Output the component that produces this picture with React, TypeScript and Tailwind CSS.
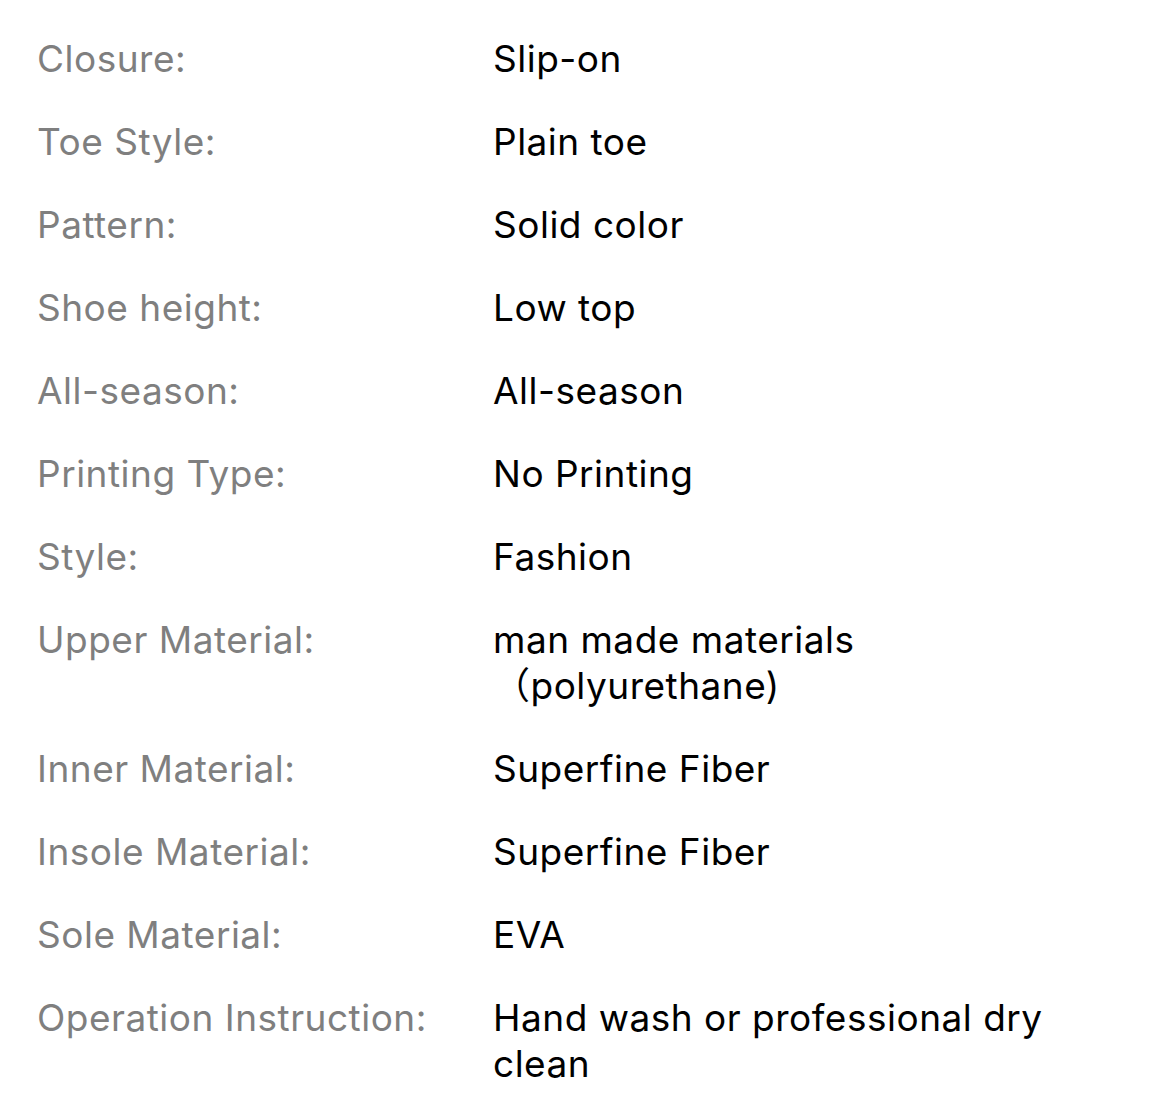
import React from "react";

const rows: [string, React.ReactNode][] = [
  ["Closure:", "Slip-on"],
  ["Toe Style:", "Plain toe"],
  ["Pattern:", "Solid color"],
  ["Shoe height:", "Low top"],
  ["All-season:", "All-season"],
  ["Printing Type:", "No Printing"],
  ["Style:", "Fashion"],
  [
    "Upper Material:",
    <>
      man made materials
      <br />
      （polyurethane)
    </>,
  ],
  ["Inner Material:", "Superfine Fiber"],
  ["Insole Material:", "Superfine Fiber"],
  ["Sole Material:", "EVA"],
  ["Operation Instruction:", "Hand wash or professional dry clean"],
];

export default function App() {
  return (
    <div
      className="w-[1170px] h-[1118px] bg-white pl-[37px] pt-[36px] flex flex-col gap-[37px] overflow-hidden"
      style={{ fontFamily: "Inter, 'Noto Sans CJK SC', sans-serif" }}
    >
      {rows.map(([k, v], i) => (
        <div key={i} className="flex text-[37px] leading-[46px] tracking-[0.5px]">
          <div className="w-[456px] shrink-0 text-[#7f7f7f]">{k}</div>
          <div className="w-[570px] text-black">{v}</div>
        </div>
      ))}
    </div>
  );
}
